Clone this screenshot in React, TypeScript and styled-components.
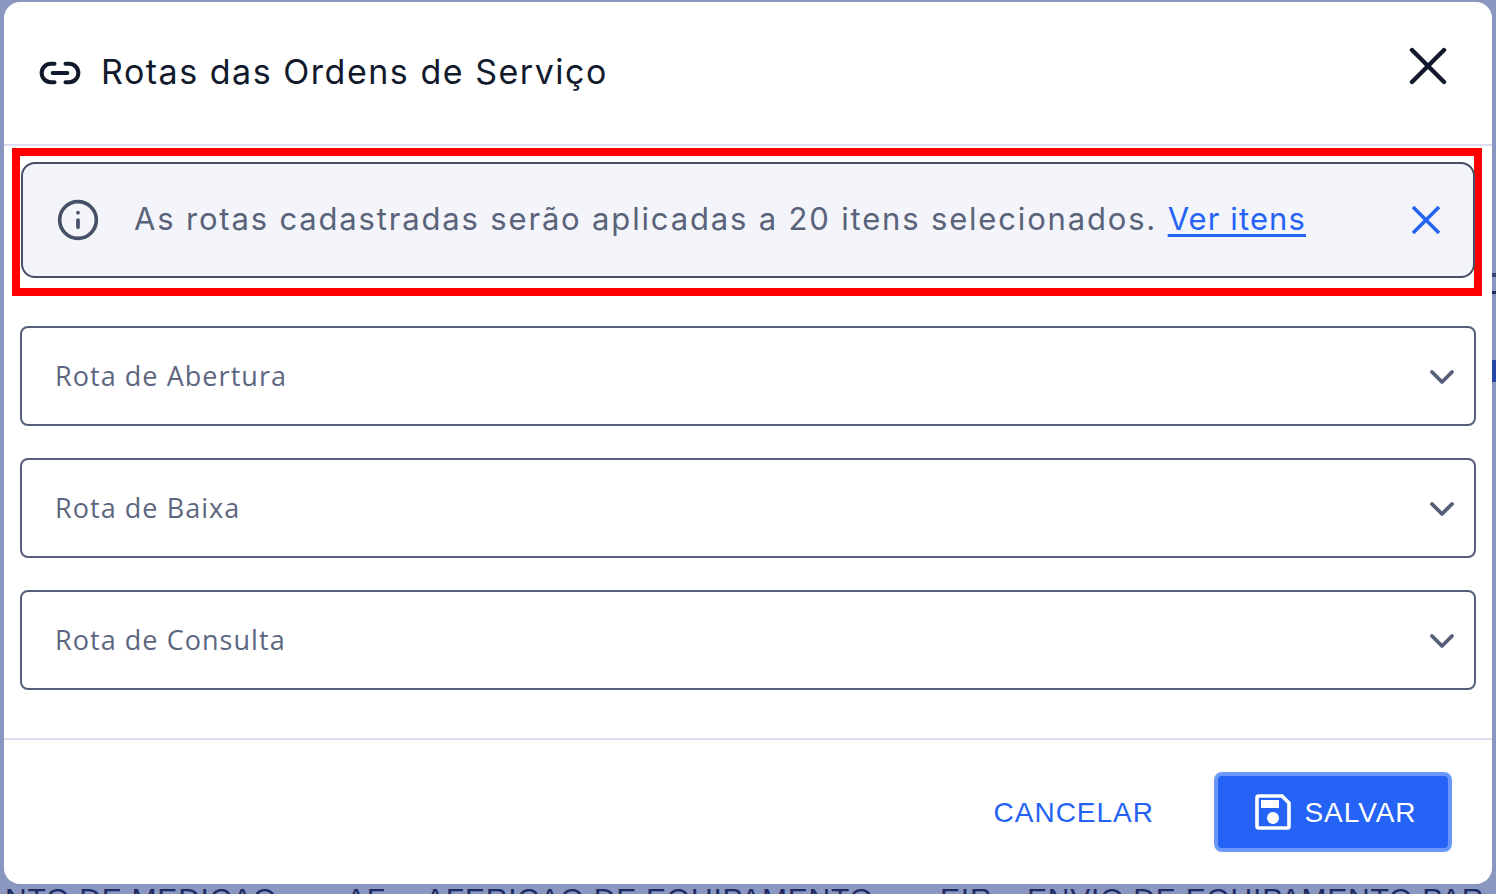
import React from "react";
import styled, { createGlobalStyle } from "styled-components";
import { ChevronDown, Info, Link2 } from "lucide-react";

const Global = createGlobalStyle`
  html, body { margin: 0; padding: 0; width: 1496px; height: 894px; overflow: hidden; background: #8a97c1; }
  * { box-sizing: border-box; }
`;

const Page = styled.div`
  width: 1496px;
  height: 894px;
  padding: 2px 4px 0;
  display: flex;
  flex-direction: column;
  overflow: hidden;
  position: relative;
`;

const Modal = styled.section`
  height: 882px;
  flex: none;
  background: #fff;
  border-radius: 16px;
  display: flex;
  flex-direction: column;
`;

const Header = styled.header`
  height: 142px;
  flex: none;
  display: flex;
  align-items: center;
  padding: 0 43px 0 34px;
  color: #111a2c;
`;

const Title = styled.h2`
  margin: 0 0 2px 19px;
  flex: 1;
  font: 400 34px/44px "Inter", "Noto Sans", sans-serif;
  letter-spacing: 1.52px;
  color: #111a2c;
`;

const CloseButton = styled.button`
  border: 0;
  padding: 0;
  background: none;
  display: flex;
  margin-bottom: 12px;
  color: #111a2c;
`;

const Divider = styled.hr`
  margin: 0;
  border: 0;
  height: 2px;
  flex: none;
  background: #dcdff1;
`;

const Highlight = styled.div`
  margin: 2px 10px 0 8px;
  height: 148px;
  border: 8px solid #ff0000;
  padding: 6px 0 2px;
  flex: none;
`;

const Alert = styled.div`
  height: 116px;
  margin: 0 -1px 0 1px;
  background: #f3f5fa;
  border: 2px solid #475069;
  border-radius: 14px;
  display: flex;
  align-items: center;
  padding: 0 32px 0 33px;
  color: #475069;
`;

const AlertText = styled.p`
  margin: 0 0 2px 34px;
  flex: 1;
  font: 400 31px/40px "Inter", "Noto Sans", sans-serif;
  letter-spacing: 1.83px;
  color: #5a6379;
`;

const AlertLink = styled.a`
  color: #2563f6;
  letter-spacing: 1.1px;
  text-decoration: underline;
  text-underline-offset: 4px;
`;

const AlertClose = styled.button`
  border: 0;
  padding: 0;
  background: none;
  display: flex;
`;

const Fields = styled.div`
  display: flex;
  flex-direction: column;
  gap: 32px;
  padding: 30px 16px 48px;
  flex: none;
`;

const Field = styled.div`
  height: 100px;
  border: 2px solid #565e7a;
  border-radius: 8px;
  display: flex;
  align-items: center;
  justify-content: space-between;
  padding: 0 12px 0 33px;
  color: #565e7a;
`;

const FieldLabel = styled.span`
  font: 400 27px/34px "Open Sans", "Noto Sans", sans-serif;
  letter-spacing: 1.05px;
  color: #5d6680;
`;

const FieldChevron = styled(ChevronDown)`
  margin-top: 1px;
`;

const Footer = styled.footer`
  flex: 1;
  display: flex;
  align-items: flex-start;
  justify-content: flex-end;
  padding: 32px 40px 0 0;
  gap: 60px;
`;

const CancelButton = styled.button`
  height: 80px;
  border: 0;
  padding: 2px 0 0;
  background: none;
  color: #2563f6;
  font: 400 28px/36px "Liberation Sans", Arial, sans-serif;
  letter-spacing: 1px;
`;

const SaveLabel = styled.span`
  padding-top: 2px;
`;

const SaveButton = styled.button`
  width: 238px;
  height: 80px;
  border: 4px solid #6a98f8;
  border-radius: 8px;
  background: #2563f6;
  color: #fff;
  display: flex;
  align-items: center;
  justify-content: center;
  gap: 13px;
  padding: 0 0 0 6px;
  font: 400 28px/36px "Liberation Sans", Arial, sans-serif;
  letter-spacing: 0.95px;
`;

const BackdropText = styled.div`
  height: 10px;
  flex: none;
  margin: 0 -4px;
  position: relative;
  overflow: hidden;
`;

const BackdropItem = styled.span<{ $left: number }>`
  position: absolute;
  left: ${(p) => p.$left}px;
  top: -1px;
  font: 400 30px/32px "Liberation Sans", Arial, sans-serif;
  letter-spacing: 0.78px;
  white-space: nowrap;
  color: #1f2c63;
`;

const EdgeMark = styled.i<{ $top: number; $height: number; $color: string }>`
  position: absolute;
  right: 0;
  width: 4px;
  top: ${(p) => p.$top}px;
  height: ${(p) => p.$height}px;
  background: ${(p) => p.$color};
`;

const CloseIcon = () => (
  <svg width="40" height="40" viewBox="0 0 40 40" fill="none" stroke="currentColor" strokeWidth="4.4" strokeLinecap="round">
    <path d="M3 3 35 35M35 3 3 35" />
  </svg>
);

const SmallClose = () => (
  <svg width="30" height="30" viewBox="0 0 30 30" fill="none" stroke="#2563f6" strokeWidth="3.6">
    <path d="M2 2 28 28M28 2 2 28" />
  </svg>
);

const SaveIcon = () => (
  <svg width="36" height="36" viewBox="0 0 36 36" fill="none">
    <path d="M3.5 2H27L34 9V32.5Q34 34 32.5 34H3.5Q2 34 2 32.5V3.5Q2 2 3.5 2Z" stroke="#fff" strokeWidth="3.6" />
    <rect x="6" y="6" width="18" height="8" fill="#fff" />
    <circle cx="18" cy="24" r="6" fill="#fff" />
  </svg>
);

const backdrop: [number, string][] = [
  [5, "NTO DE MEDICAO"],
  [346, "AF"],
  [425, "AFERICAO DE EQUIPAMENTO"],
  [940, "EIR"],
  [1027, "ENVIO DE EQUIPAMENTO PAR"],
];

export default function App() {
  return (
    <Page>
      <Global />
      <Modal>
        <Header>
          <Link2 size={44} strokeWidth={2.2} />
          <Title>Rotas das Ordens de Serviço</Title>
          <CloseButton aria-label="Fechar"><CloseIcon /></CloseButton>
        </Header>
        <Divider />
        <Highlight>
          <Alert>
            <Info size={44} strokeWidth={2} />
            <AlertText>
              As rotas cadastradas serão aplicadas a 20 itens selecionados. <AlertLink href="#">Ver itens</AlertLink>
            </AlertText>
            <AlertClose aria-label="Dispensar"><SmallClose /></AlertClose>
          </Alert>
        </Highlight>
        <Fields>
          {["Rota de Abertura", "Rota de Baixa", "Rota de Consulta"].map((label) => (
            <Field key={label}>
              <FieldLabel>{label}</FieldLabel>
              <FieldChevron size={40} strokeWidth={2.3} />
            </Field>
          ))}
        </Fields>
        <Divider />
        <Footer>
          <CancelButton>CANCELAR</CancelButton>
          <SaveButton><SaveIcon /><SaveLabel>SALVAR</SaveLabel></SaveButton>
        </Footer>
      </Modal>
      <BackdropText>
        {backdrop.map(([left, text]) => (
          <BackdropItem key={text} $left={left}>{text}</BackdropItem>
        ))}
      </BackdropText>
      <EdgeMark $top={273} $height={4} $color="#3a4570" />
      <EdgeMark $top={291} $height={3} $color="#1f2c63" />
      <EdgeMark $top={360} $height={22} $color="#2548a8" />
    </Page>
  );
}
